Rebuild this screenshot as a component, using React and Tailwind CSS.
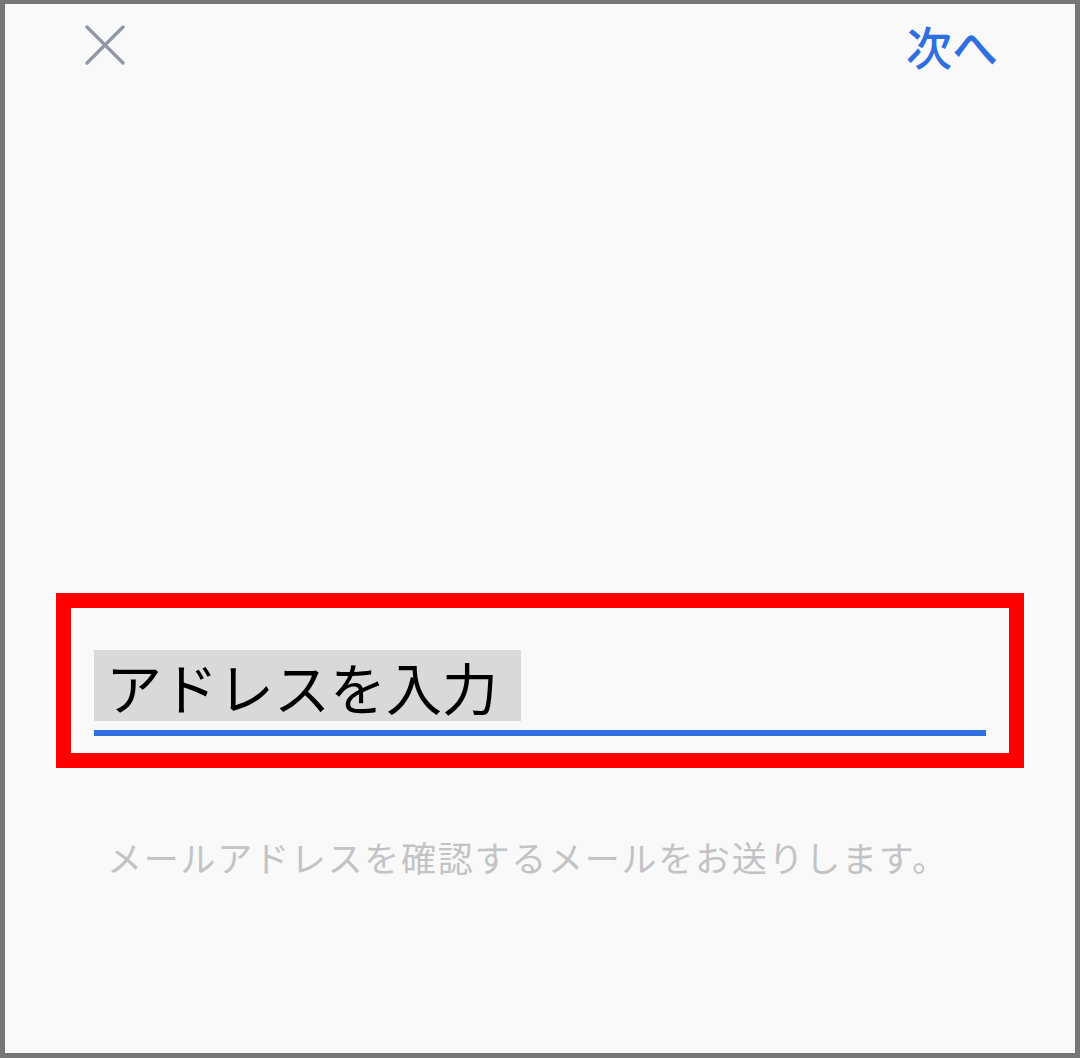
import React from "react";

export default function App() {
  return (
    <div
      className="w-[1080px] h-[1058px] box-border bg-[#f9f9f9] border-solid border-[#767676] border-t-4 border-l-[5px] border-r-[5px] border-b-[5px] flex flex-col"
      style={{ fontFamily: '"Noto Sans CJK JP", "Noto Sans", sans-serif' }}
    >
      <div className="flex items-center justify-between pl-[80px] pr-[77px] pt-[18px] h-[46px] box-content">
        <svg width="40" height="40" viewBox="0 0 40 40" fill="none">
          <path d="M2 2 L38 38 M38 2 L2 38" stroke="#8f97a4" strokeWidth="3.2" strokeLinecap="round" />
        </svg>
        <span className="text-[46px] leading-none font-medium text-[#2f6fdf]">次へ</span>
      </div>

      <div className="ml-[51px] mt-[525px] w-[968px] h-[175px] box-border border-[15px] border-solid border-[#ff0000] flex flex-col pl-[23px] pr-[23px] pt-[42px]">
        <div className="w-[427px] h-[71px] bg-[#d9d9d9] flex items-center pl-[12px]">
          <span className="text-[56px] leading-none text-black">アドレスを入力</span>
        </div>
        <div className="mt-[9px] w-[892px] h-[6px] bg-[#2f6fdf]" />
      </div>

      <div className="pl-[102px] mt-[71px] text-[35px] leading-none tracking-[1.75px] text-[#c3c3c6]">
        メールアドレスを確認するメールをお送りします。
      </div>
    </div>
  );
}
